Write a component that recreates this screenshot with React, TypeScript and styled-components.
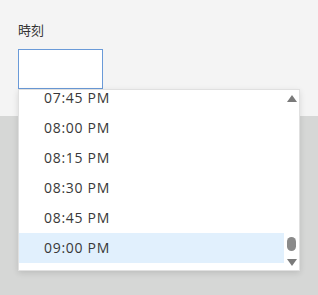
import React from "react";
import styled, { createGlobalStyle } from "styled-components";

const times = ["07:45 PM", "08:00 PM", "08:15 PM", "08:30 PM", "08:45 PM", "09:00 PM"];
const selected = "09:00 PM";

const GlobalStyle = createGlobalStyle`
    html, body {
        margin: 0;
        padding: 0;
        background: #d6d7d6;
        font-family: "Open Sans", "Noto Sans CJK JP", sans-serif;
    }
`;

const App = () => {
    return (
        <>
            <GlobalStyle />
            <Page>
                <TopPanel>
                    <Label>時刻</Label>
                    <Field>
                        <TimeInput />
                        <Dropdown>
                            <Viewport>
                                <List>
                                    {times.map((t) => (
                                        <Option key={t} $active={t === selected}>
                                            {t}
                                        </Option>
                                    ))}
                                </List>
                            </Viewport>
                            <ScrollTrack>
                                <Arrow $up />
                                <Thumb />
                                <Arrow />
                            </ScrollTrack>
                        </Dropdown>
                    </Field>
                </TopPanel>
            </Page>
        </>
    );
};

const Page = styled.div`
    width: 318px;
    height: 295px;
    background: #d6d7d6;
`;

const TopPanel = styled.div`
    display: flex;
    flex-direction: column;
    align-items: flex-start;
    gap: 10px;
    height: 116px;
    padding: 20px 0 0 18px;
    box-sizing: border-box;
    background: #f4f4f4;
`;

const Label = styled.span`
    font-family: "Noto Sans CJK JP", sans-serif;
    font-size: 13px;
    line-height: 19px;
    color: #333;
`;

const Field = styled.div`
    position: relative;
`;

const TimeInput = styled.div`
    width: 85px;
    height: 40px;
    box-sizing: border-box;
    border: 1px solid #6a9ad8;
    background: #fff;
`;

const Dropdown = styled.div`
    position: absolute;
    top: 40px;
    left: 0;
    display: flex;
    width: 282px;
    height: 182px;
    box-sizing: border-box;
    border: 1px solid #e0e0e0;
    background: #fff;
    box-shadow: 0 2px 6px rgba(0, 0, 0, 0.12);
    z-index: 10;
`;

const Viewport = styled.div`
    flex: 1;
    overflow: hidden;
`;

const List = styled.ul`
    margin: -7px 0 0;
    padding: 0;
    list-style: none;
`;

const Option = styled.li<{ $active?: boolean }>`
    display: flex;
    align-items: center;
    height: 30px;
    padding-left: 25px;
    font-size: 14px;
    line-height: 14px;
    letter-spacing: 0.7px;
    color: #383838;
    background: ${({ $active }) => ($active ? "#e1f0fd" : "transparent")};
`;

const ScrollTrack = styled.div`
    display: flex;
    flex-direction: column;
    align-items: center;
    width: 15px;
    padding: 5px 0 4px;
    box-sizing: border-box;
`;

const Arrow = styled.div<{ $up?: boolean }>`
    width: 0;
    height: 0;
    border-left: 5px solid transparent;
    border-right: 5px solid transparent;
    ${({ $up }) =>
        $up
            ? "border-bottom: 7px solid #7a7a7a; margin-bottom: auto;"
            : "border-top: 7px solid #7a7a7a; margin-top: 8px;"}
`;

const Thumb = styled.div`
    width: 9px;
    height: 14px;
    border-radius: 5px;
    background: #8a8a8a;
`;

export default App;
